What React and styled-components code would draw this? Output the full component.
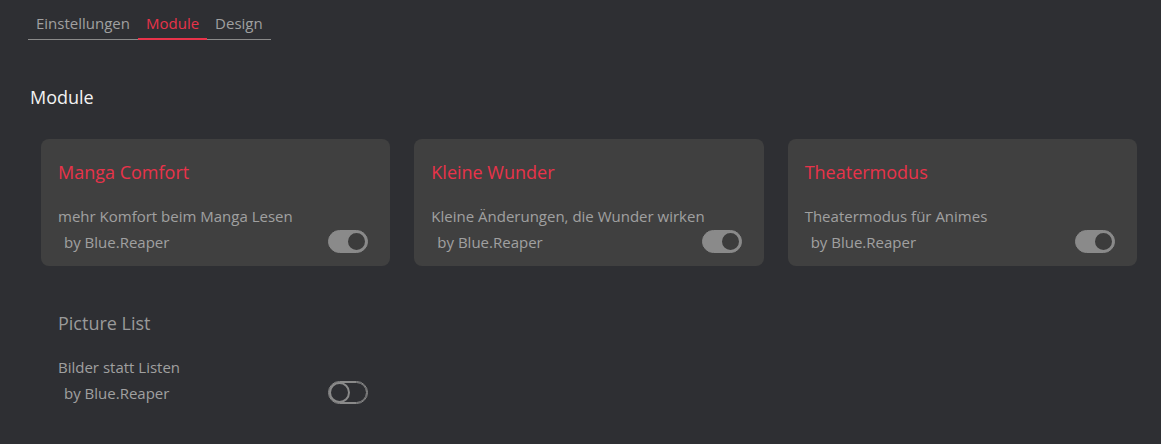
import styled, { createGlobalStyle } from "styled-components";

const modules = [
  { name: "Manga Comfort", desc: "mehr Komfort beim Manga Lesen", active: true },
  { name: "Kleine Wunder", desc: "Kleine Änderungen, die Wunder wirken", active: true },
  { name: "Theatermodus", desc: "Theatermodus für Animes", active: true },
  { name: "Picture List", desc: "Bilder statt Listen", active: false },
];

function App() {
  return (<>
    <GlobalStyle />
    <Page>
      <Tabs>
        <Tab>Einstellungen</Tab>
        <Tab active>Module</Tab>
        <Tab>Design</Tab>
      </Tabs>
      <Heading>Module</Heading>
      <Grid>
        {modules.map((m) => (
          <Card key={m.name} active={m.active}>
            <Title active={m.active}>{m.name}</Title>
            <Desc>{m.desc}</Desc>
            <Footer>
              <Author>by Blue.Reaper</Author>
              <Toggle active={m.active}><Knob active={m.active} /></Toggle>
            </Footer>
          </Card>
        ))}
      </Grid>
    </Page>
  </>
  );
}

const GlobalStyle = createGlobalStyle`
body {
  margin: 0;
  background: #2e2f33;
  font-family: "Open Sans", "Noto Sans", sans-serif;
}
`

const Page = styled.div`
padding: 10px 24px 0 28px;
min-height: 444px;
box-sizing: border-box;
background: #2e2f33;
`

const Tabs = styled.div`
display: inline-flex;
border-bottom: 1px solid #8a8a8a;
`

const Tab = styled.div`
padding: 3px 8px 6px;
font-size: 15px;
color: ${(p) => (p.active ? "#e8334a" : "#a0a0a0")};
position: relative;
&::after {
  content: "";
  display: ${(p) => (p.active ? "block" : "none")};
  position: absolute;
  left: 0;
  right: 0;
  bottom: -1px;
  height: 2px;
  background: #e8334a;
}
`

const Heading = styled.h2`
margin: 45px 0 0 2px;
font-size: 18px;
font-weight: 400;
color: #f2f2f2;
`

const Grid = styled.div`
display: grid;
grid-template-columns: repeat(3, 1fr);
gap: 24px 24px;
margin: 30px 0 0 13px;
`

const Card = styled.div`
height: 127px;
box-sizing: border-box;
padding: 20px 22px 0 17px;
border-radius: 8px;
background: ${(p) => (p.active ? "#404040" : "transparent")};
`

const Title = styled.div`
font-size: 18px;
color: ${(p) => (p.active ? "#e8334a" : "#9a9a9a")};
line-height: 26px;
`

const Desc = styled.div`
margin-top: 20px;
font-size: 15px;
color: #a0a0a0;
line-height: 22px;
`

const Footer = styled.div`
display: flex;
justify-content: space-between;
align-items: center;
margin-top: 3px;
`

const Author = styled.div`
padding-left: 6px;
font-size: 15px;
color: #a0a0a0;
`

const Toggle = styled.div`
width: 40px;
height: 23px;
box-sizing: border-box;
border-radius: 12px;
border: 1px solid #8a8a8a;
outline: ${(p) => (p.active ? "none" : "1px solid #8a8a8a")};
outline-offset: -2px;
background: ${(p) => (p.active ? "#8a8a8a" : "transparent")};
display: flex;
justify-content: ${(p) => (p.active ? "flex-end" : "flex-start")};
align-items: center;
`

const Knob = styled.div`
width: 21px;
height: 21px;
box-sizing: border-box;
border-radius: 50%;
background: ${(p) => (p.active ? "#3c3c3c" : "transparent")};
border: 2px solid #8a8a8a;
`

export default App;
